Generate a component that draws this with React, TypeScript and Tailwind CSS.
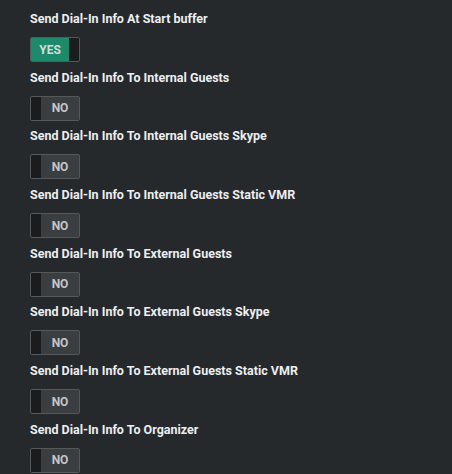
const settings = [
  { label: "Send Dial-In Info At Start buffer", on: true },
  { label: "Send Dial-In Info To Internal Guests", on: false },
  { label: "Send Dial-In Info To Internal Guests Skype", on: false },
  { label: "Send Dial-In Info To Internal Guests Static VMR", on: false },
  { label: "Send Dial-In Info To External Guests", on: false },
  { label: "Send Dial-In Info To External Guests Skype", on: false },
  { label: "Send Dial-In Info To External Guests Static VMR", on: false },
  { label: "Send Dial-In Info To Organizer", on: false },
];

const Toggle = ({ on }: { on: boolean }) => (
  <div className="flex h-[25px] w-[50px] overflow-hidden rounded-[2px] border border-[#56585a]">
    {on ? (
      <>
        <div className="flex flex-1 items-center justify-center bg-[#1d8a6b] text-[12px] font-bold text-[#d4dcd8]">
          YES
        </div>
        <div className="w-[10px] bg-[#1b1c1e]" />
      </>
    ) : (
      <>
        <div className="w-[10px] bg-[#1b1c1e]" />
        <div className="flex flex-1 items-center justify-center bg-[#3a3e41] text-[12px] font-bold text-[#c4c6c8]">
          NO
        </div>
      </>
    )}
  </div>
);

export default function App() {
  return (
    <div
      className="min-h-[474px] w-full bg-[#25292c] pl-[30px] pt-[10px]"
      style={{ fontFamily: "Roboto, 'Liberation Sans', sans-serif" }}
    >
      <div className="flex flex-col gap-[6.7px]">
        {settings.map((s) => (
          <div key={s.label} className="flex flex-col">
            <div className="h-[17px] text-[12.5px] font-bold leading-[17px] text-[#eceef0]">
              {s.label}
            </div>
            <div className="mt-[10px]">
              <Toggle on={s.on} />
            </div>
          </div>
        ))}
      </div>
    </div>
  );
}
